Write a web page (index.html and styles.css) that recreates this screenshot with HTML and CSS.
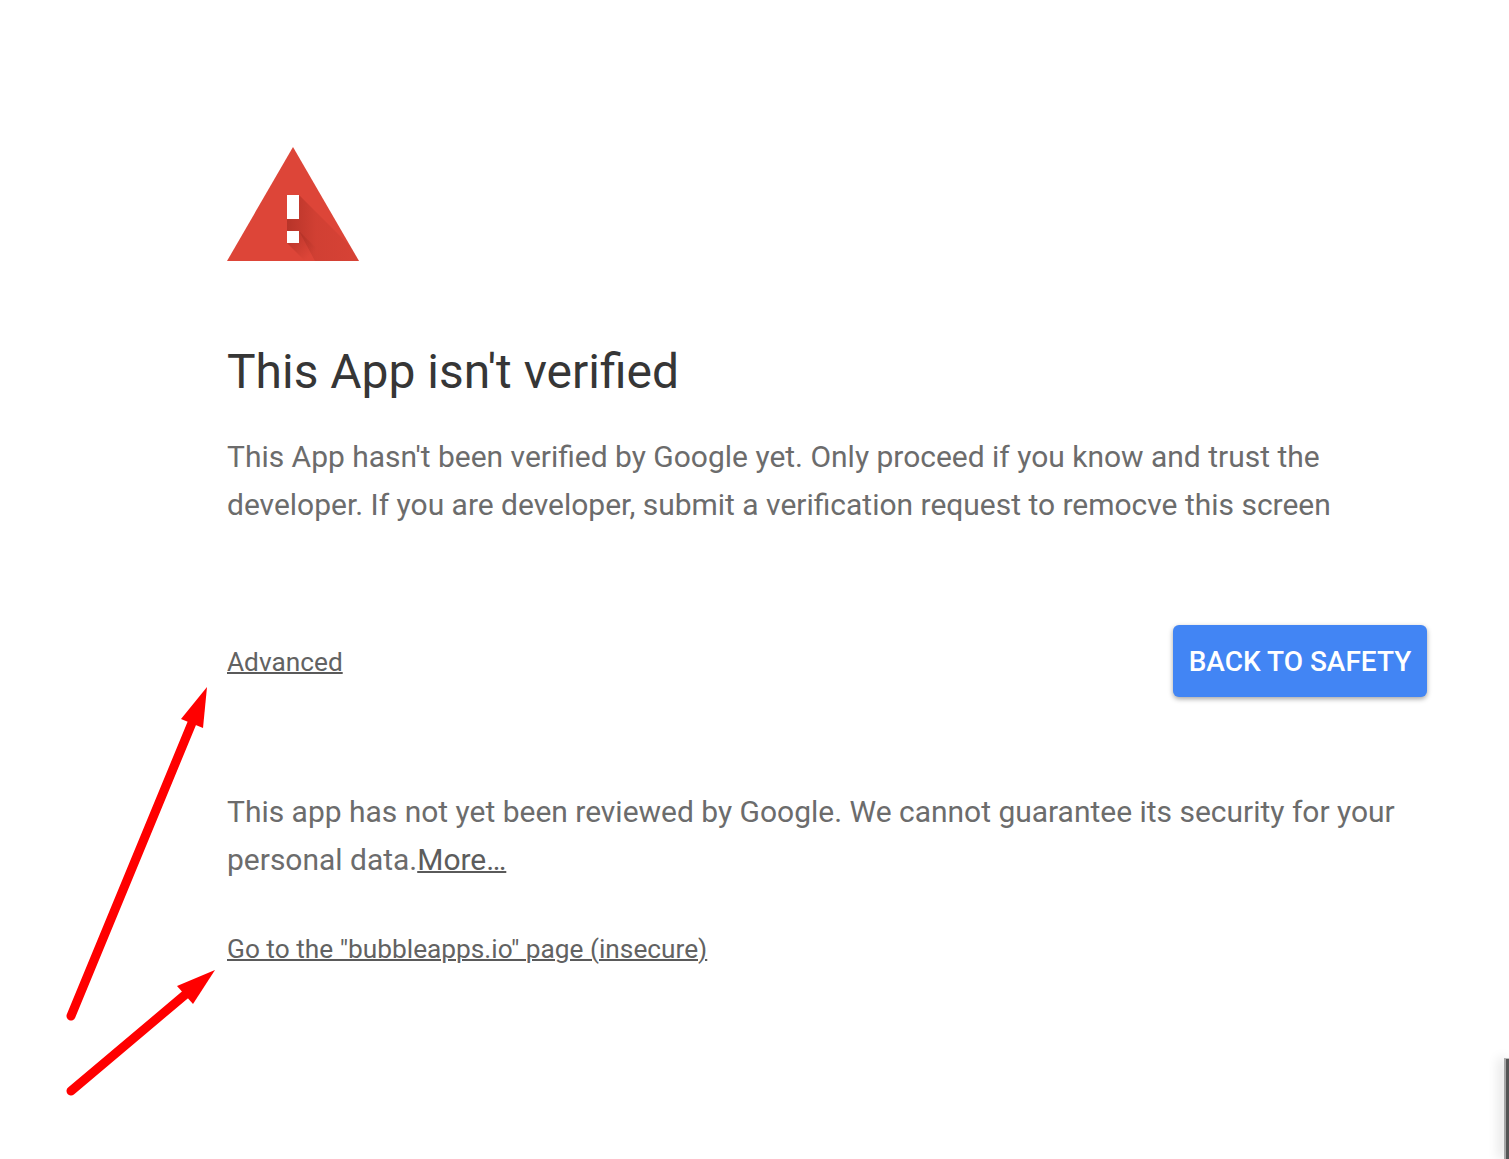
FILE: index.html
```html
<!DOCTYPE html>
<html lang="en">
<head>
<meta charset="utf-8">
<title>This App isn't verified</title>
<link rel="stylesheet" href="styles.css">
</head>
<body>
<main class="page">
  <svg class="warning" width="132" height="114" viewBox="0 0 132 114" aria-hidden="true">
    <defs>
      <linearGradient id="shade" x1="60" y1="0" x2="132" y2="0" gradientUnits="userSpaceOnUse">
        <stop offset="0" stop-color="#a02a20" stop-opacity=".62"/>
        <stop offset=".4" stop-color="#a02a20" stop-opacity=".2"/>
        <stop offset="1" stop-color="#a02a20" stop-opacity=".1"/>
      </linearGradient>
      <linearGradient id="fade" x1="60" y1="96" x2="78" y2="114" gradientUnits="userSpaceOnUse">
        <stop offset="0" stop-color="#a02a20" stop-opacity=".5"/>
        <stop offset="1" stop-color="#a02a20" stop-opacity="0"/>
      </linearGradient>
    </defs>
    <path d="M66 0 132 114H0Z" fill="#dd4538"/>
    <path d="M72 48 123.800 99.800 132 114H88L72 84H60V72H72Z" fill="url(#shade)"/>
    <path d="M60 96 72 84 102 114H78Z" fill="url(#fade)"/>
    <path d="M60 48h12v24H60zM60 84h12v12H60z" fill="#fff"/>
  </svg>
  <h1 class="title">This App isn't verified</h1>
  <p class="copy">This App hasn't been verified by Google yet. Only proceed if you know and trust the developer. If you are developer, submit a verification request to remocve this screen</p>
  <div class="actions">
    <a class="small-link advanced" href="#">Advanced</a>
    <button class="safety" type="button">BACK TO SAFETY</button>
  </div>
  <p class="copy details">This app has not yet been reviewed by Google. We cannot guarantee its security for your personal data.<a class="more" href="#">More…</a></p>
  <a class="small-link proceed" href="#">Go to the "bubbleapps.io" page (insecure)</a>
</main>
<svg class="arrows" width="1509" height="1159" viewBox="0 0 1509 1159" aria-hidden="true">
  <path d="M71 1016 194 718" class="shaft"/>
  <path d="M207 687 181 719 203 728Z" fill="#f00"/>
  <path d="M71 1091 186 994" class="shaft"/>
  <path d="M215 970 177 986 193 1004Z" fill="#f00"/>
</svg>
<div class="corner"></div>
</body>
</html>
```
FILE: styles.css
```css
html, body {
  margin: 0;
  height: 100%;
  background: #fff;
}
body {
  overflow: hidden;
  position: relative;
  font-family: Roboto, "Liberation Sans", sans-serif;
}
.page {
  box-sizing: border-box;
  width: 1427px;
  padding: 147px 0 0 227px;
  display: flex;
  flex-direction: column;
  align-items: flex-start;
}
.warning {
  display: block;
}
.title {
  margin: 83px 0 0;
  font-size: 47.95px;
  line-height: 56px;
  font-weight: 400;
  color: #363636;
}
.copy {
  margin: 33px 0 0;
  font-size: 29.97px;
  line-height: 48px;
  color: #6c6c6c;
}
.actions {
  align-self: stretch;
  margin-top: 96px;
  display: flex;
  justify-content: space-between;
  align-items: center;
}
.small-link {
  font-size: 26.25px;
  line-height: 32px;
  color: #626262;
  text-decoration: underline 2px #5a5a5a;
}
.advanced {
  padding-top: 2px;
}
.safety {
  width: 254px;
  height: 72px;
  padding: 0;
  border: 0;
  border-radius: 6px;
  background: #4285f4;
  color: #fff;
  font: 500 28px Roboto, "Liberation Sans", sans-serif;
  box-shadow: 0 2px 5px rgba(0, 0, 0, .36);
}
.details {
  margin-top: 91px;
}
.more {
  color: #5c5c5c;
  text-decoration: underline 2px #5a5a5a;
}
.proceed {
  margin-top: 49px;
}
.arrows {
  position: absolute;
  left: 0;
  top: 0;
  pointer-events: none;
}
.shaft {
  fill: none;
  stroke: #f00;
  stroke-width: 9px;
  stroke-linecap: round;
}
.corner {
  position: absolute;
  left: 1504px;
  top: 1058px;
  width: 5px;
  height: 101px;
  box-sizing: border-box;
  border-top: 1px solid #bbb;
  border-left: 2px solid #a8a8a8;
  background: #555;
  box-shadow: -4px 0 12px rgba(0, 0, 0, .18);
}
```
